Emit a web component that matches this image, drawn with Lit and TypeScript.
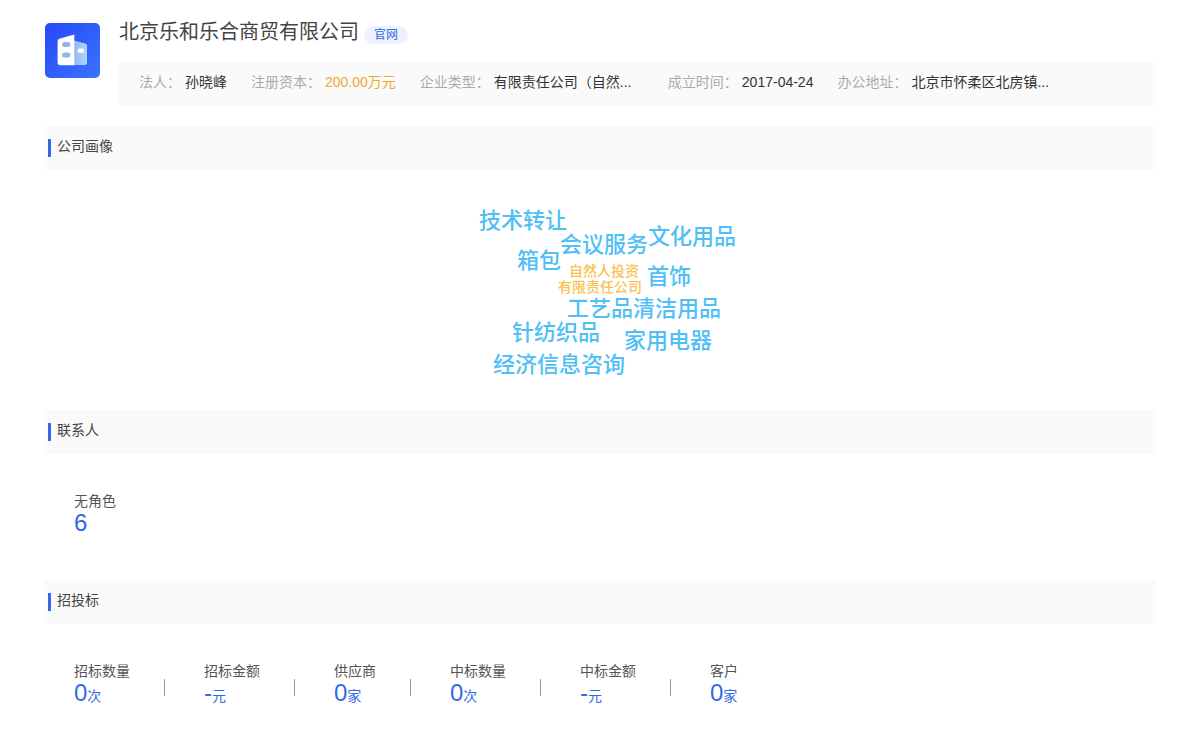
import { LitElement, html, css } from "lit";
import { customElement, property } from "lit/decorators.js";
import { styleMap } from "lit/directives/style-map.js";

interface Fact {
  label: string;
  value: string;
  kind?: "accent" | "clipped";
}

interface Stat {
  label: string;
  value: string;
  unit?: string;
}

interface Tag {
  text: string;
  x: number;
  y: number;
  minor?: boolean;
}

const FACTS: Fact[] = [
  { label: "法人", value: "孙晓峰" },
  { label: "注册资本", value: "200.00万元", kind: "accent" },
  { label: "企业类型", value: "有限责任公司（自然...", kind: "clipped" },
  { label: "成立时间", value: "2017-04-24" },
  { label: "办公地址", value: "北京市怀柔区北房镇...", kind: "clipped" },
];

const TAGS: Tag[] = [
  { text: "技术转让", x: 0, y: 0 },
  { text: "文化用品", x: 169, y: 16 },
  { text: "会议服务", x: 81, y: 24 },
  { text: "箱包", x: 38, y: 40 },
  { text: "自然人投资", x: 90, y: 51, minor: true },
  { text: "首饰", x: 168, y: 56 },
  { text: "有限责任公司", x: 79, y: 67, minor: true },
  { text: "工艺品", x: 88, y: 88 },
  { text: "清洁用品", x: 154, y: 88 },
  { text: "针纺织品", x: 33, y: 112 },
  { text: "家用电器", x: 145, y: 120 },
  { text: "经济信息咨询", x: 14, y: 144 },
];

const CONTACTS: Stat[] = [{ label: "无角色", value: "6" }];

const BIDS: Stat[] = [
  { label: "招标数量", value: "0", unit: "次" },
  { label: "招标金额", value: "-", unit: "元" },
  { label: "供应商", value: "0", unit: "家" },
  { label: "中标数量", value: "0", unit: "次" },
  { label: "中标金额", value: "-", unit: "元" },
  { label: "客户", value: "0", unit: "家" },
];

@customElement("panel-section")
export class PanelSection extends LitElement {
  @property() heading = "";

  static styles = css`
    :host {
      display: block;
    }
    .bar {
      display: flex;
      align-items: center;
      gap: 6px;
      height: 44px;
      padding-left: 4px;
      background: #fafafa;
    }
    .mark {
      width: 3px;
      height: 18px;
      background: #3369e6;
    }
    .title {
      margin: 0;
      padding-bottom: 4px;
      font-size: 14px;
      line-height: 20px;
      font-weight: 400;
      color: #444;
    }
  `;

  render() {
    return html`
      <div class="bar">
        <span class="mark"></span>
        <h2 class="title">${this.heading}</h2>
      </div>
      <slot></slot>
    `;
  }
}

@customElement("stat-row")
export class StatRow extends LitElement {
  @property({ attribute: false }) items: Stat[] = [];

  static styles = css`
    .row {
      display: flex;
      flex-wrap: wrap;
      margin: 0;
      padding: 36px 30px 46px;
    }
    .stat {
      display: flex;
      align-items: center;
    }
    .stat + .stat::before {
      content: "";
      width: 1px;
      height: 17px;
      margin: 8px 39px 0 34px;
      background: #999;
    }
    .label {
      font-size: 14px;
      line-height: 22px;
      color: #555;
    }
    .value {
      margin: 0;
      font-size: 24px;
      line-height: 22px;
      color: #3369e6;
    }
    .unit {
      font-size: 14px;
    }
  `;

  render() {
    return html`
      <dl class="row">
        ${this.items.map(
          (s) => html`
            <div class="stat">
              <div>
                <dt class="label">${s.label}</dt>
                <dd class="value">${s.value}${s.unit ? html`<span class="unit">${s.unit}</span>` : null}</dd>
              </div>
            </div>
          `
        )}
      </dl>
    `;
  }
}

@customElement("tag-cloud")
export class TagCloud extends LitElement {
  @property({ attribute: false }) tags: Tag[] = [];

  static styles = css`
    :host {
      display: flex;
      justify-content: center;
      padding: 36px 0 32px;
    }
    .cloud {
      position: relative;
      width: 258px;
      height: 172px;
      margin-left: 16px;
    }
    .tag {
      position: absolute;
      font-size: 22px;
      line-height: 30px;
      font-weight: 500;
      white-space: nowrap;
      color: #50bff5;
    }
    .minor {
      font-size: 14px;
      line-height: 28px;
      color: #f8c24c;
    }
  `;

  render() {
    return html`
      <div class="cloud">
        ${this.tags.map(
          (t) => html`<span
            class=${t.minor ? "tag minor" : "tag"}
            style=${styleMap({ left: `${t.x}px`, top: `${t.y}px` })}
            >${t.text}</span
          >`
        )}
      </div>
    `;
  }
}

@customElement("app-root")
export class AppRoot extends LitElement {
  static styles = css`
    :host {
      display: block;
      padding: 18px 44px 0;
      background: #fff;
      color: #444;
      font-family: "Liberation Sans", "Noto Sans CJK SC", sans-serif;
      font-size: 14px;
    }
    .header {
      display: flex;
      gap: 19px;
      margin-bottom: 20px;
    }
    .logo {
      flex: none;
      width: 56px;
      height: 56px;
      margin-top: 4px;
    }
    .company {
      flex: 1;
      min-width: 0;
    }
    .name-row {
      display: flex;
      align-items: center;
      gap: 5px;
      height: 44px;
      box-sizing: border-box;
      padding-bottom: 16px;
    }
    .name {
      margin: 0;
      font-size: 20px;
      line-height: 28px;
      font-weight: 400;
    }
    .site {
      margin-top: 6px;
      padding: 0 10px;
      border-radius: 9px;
      background: #ecf2fe;
      color: #3369e6;
      font-size: 12px;
      line-height: 18px;
      text-decoration: none;
    }
    .facts {
      display: flex;
      flex-wrap: wrap;
      column-gap: 24px;
      margin: 0;
      padding: 10px 20px 14px;
      background: #fafafa;
      line-height: 20px;
    }
    .fact {
      display: flex;
      gap: 4px;
    }
    .label {
      color: #aaa;
    }
    .value {
      margin: 0;
      white-space: nowrap;
      color: #333;
    }
    .clipped {
      min-width: 150px;
    }
    .accent {
      color: #f0a732;
    }
  `;

  render() {
    return html`
      <header class="header">
        <svg class="logo" viewBox="0 0 56 56" aria-hidden="true">
          <defs>
            <linearGradient id="tile" x1="0" y1="0" x2="1" y2="1">
              <stop offset="0" stop-color="#2648f8" />
              <stop offset="1" stop-color="#3b74fb" />
            </linearGradient>
            <linearGradient id="wing" x1="0" y1="0" x2="1" y2="0">
              <stop offset="0" stop-color="#8fb8f8" />
              <stop offset="1" stop-color="#b4d6fd" />
            </linearGradient>
          </defs>
          <rect x="1" y="1" width="55" height="55" rx="5" fill="url(#tile)" />
          <path d="M30 18.5 L41.2 21.6 Q43 22.2 43 24 V40.5 Q43 43 40.5 43 H30 Z" fill="url(#wing)" />
          <path d="M15.4 16.8 Q13.6 17.4 13.6 19.4 V40.5 Q13.6 43.3 16.4 43.3 H30.3 V12.6 Z" fill="#fff" />
          <rect x="18" y="20" width="8.4" height="5" rx="2.5" fill="#93b4ee" />
          <rect x="18" y="30.5" width="8.4" height="5" rx="2.5" fill="#93b4ee" />
          <rect x="33.5" y="26.5" width="6.5" height="4.6" rx="2.3" fill="#fff" />
        </svg>
        <div class="company">
          <div class="name-row">
            <h1 class="name">北京乐和乐合商贸有限公司</h1>
            <a class="site" href="#">官网</a>
          </div>
          <dl class="facts">
            ${FACTS.map(
              (f) => html`
                <div class="fact">
                  <dt class="label">${f.label}：</dt>
                  <dd class="value ${f.kind ?? ""}">${f.value}</dd>
                </div>
              `
            )}
          </dl>
        </div>
      </header>
      <main>
        <panel-section heading="公司画像">
          <tag-cloud .tags=${TAGS}></tag-cloud>
        </panel-section>
        <panel-section heading="联系人">
          <stat-row .items=${CONTACTS}></stat-row>
        </panel-section>
        <panel-section heading="招投标">
          <stat-row .items=${BIDS}></stat-row>
        </panel-section>
      </main>
    `;
  }
}
